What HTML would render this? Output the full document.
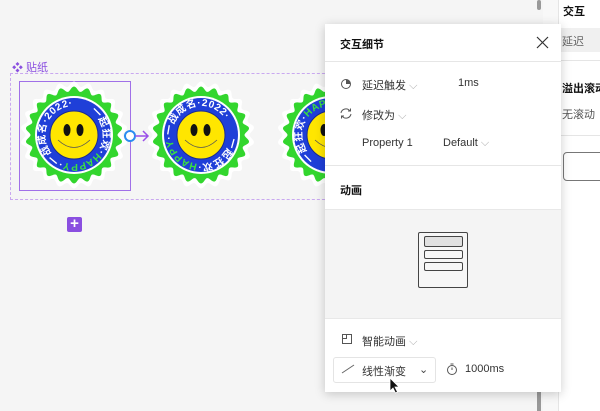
<!DOCTYPE html>
<html><head><meta charset="utf-8"><style>
*{margin:0;padding:0;box-sizing:border-box}
body{width:600px;height:411px;overflow:hidden;background:#f5f5f5;position:relative;font-family:"Liberation Sans","Noto Sans CJK SC",sans-serif;color:#222}
.abs{position:absolute}
.t{font-size:11px;color:#333;white-space:nowrap}
</style></head><body>
<div class="abs" style="left:12px;top:59px;font-size:11px;color:#8a4fe0">❖ 贴纸</div>
<div class="abs" style="left:10px;top:73px;width:330px;height:127px;border:1px dashed #c9a8f0"></div>
<div class="abs" style="left:19px;top:81px;width:112px;height:110px;border:1px solid #a070e8"></div>
<div class="abs" style="left:67px;top:217px;width:15px;height:15px;background:#8a4fe0;border-radius:2px;color:#fff;font-size:15px;line-height:14px;text-align:center;font-weight:bold">+</div>
<svg class="abs" style="left:0;top:0" width="340" height="240" id="stk"></svg>
<script>
(function(){
var svg=document.getElementById('stk');
function scal(r,a,n){var p=[];for(var i=0;i<=360;i++){var t=i*Math.PI/180;var rr=r+a*Math.cos(n*t);p.push((rr*Math.sin(t)).toFixed(2)+','+(-rr*Math.cos(t)).toFixed(2));}return p.join(' ');}
function st(cx,cy,rot){
 var g='<g transform="translate('+cx+','+cy+')">';
 g+='<polygon points="'+scal(51,2.5,22)+'" fill="#fff"/>';
 g+='<polygon points="'+scal(46,2.5,22)+'" fill="#33d62e"/>';
 g+='<circle r="39" fill="#fff"/><circle r="37" fill="#1f3fd8"/>';
 g+='<g transform="rotate('+rot+')"><path id="rp'+cx+'" d="M0,-29 A29,29 0 1,1 -0.1,-29" fill="none"/>';
 g+='<text font-size="10" font-weight="bold" fill="#fff" letter-spacing="0.6" font-family="Liberation Sans,Noto Sans CJK SC,sans-serif"><textPath href="#rp'+cx+'">一起狂欢·<tspan fill="#3be040">HAPPY</tspan>·一战成名·2022·</textPath></text></g>';
 g+='<circle r="24" fill="#ffe600" stroke="#1a2a90" stroke-width="1"/>';
 g+='<ellipse cx="-7" cy="-5" rx="3.5" ry="6" fill="#111"/><ellipse cx="6" cy="-5" rx="3.5" ry="6" fill="#111"/>';
 g+='<path d="M-16,5 Q0,20 16,5" fill="none" stroke="#555" stroke-width=".8"/></g>';
 return g;}
svg.innerHTML=st(74,135,35)+st(201,135,95)+st(331,135,215)+
 '<circle cx="130" cy="136" r="5" fill="#fff" stroke="#2a8cf0" stroke-width="2"/><path d="M135,136 H148 M143,131 L148,136 L143,141" stroke="#9a4fe8" stroke-width="1.5" fill="none"/>';
})();
</script>
<div class="abs" style="left:537px;top:0;width:4px;height:10px;background:#999;border-radius:2px"></div>
<div class="abs" style="left:537px;top:390px;width:4px;height:21px;background:#999"></div>
<div class="abs" style="left:543px;top:0;width:18px;height:411px;background:#f8f8f8"></div>
<div class="abs" style="left:558px;top:0;width:42px;height:411px;background:#fff;border-left:1px solid #e5e5e5">
 <div class="t abs" style="left:4px;top:3px;font-weight:bold;color:#111">交互</div>
 <div class="abs" style="left:0;top:28px;width:42px;height:24px;background:#f0f0f0"></div>
 <div class="t abs" style="left:3px;top:33px;color:#666">延迟</div>
 <div class="abs" style="left:0;top:60px;width:42px;border-top:1px solid #e5e5e5"></div>
 <div class="t abs" style="left:3px;top:80px;font-weight:bold;color:#111">溢出滚动</div>
 <div class="t abs" style="left:3px;top:106px;color:#555">无滚动</div>
 <div class="abs" style="left:0;top:135px;width:42px;border-top:1px solid #e5e5e5"></div>
 <div class="abs" style="left:4px;top:152px;width:50px;height:29px;border:1px solid #777;border-radius:4px"></div>
</div>
<div class="abs" style="left:325px;top:24px;width:236px;height:368px;background:#fff;box-shadow:0 2px 10px rgba(0,0,0,.2)">
 <div class="t abs" style="left:15px;top:12px;font-weight:bold;color:#111">交互细节</div>
 <svg class="abs" style="left:211px;top:12px" width="13" height="13"><path d="M1,1 L12,12 M12,1 L1,12" stroke="#333" stroke-width="1.2"/></svg>
 <div class="abs" style="left:0;top:37px;width:236px;border-top:1px solid #e6e6e6"></div>
 <svg class="abs" style="left:15px;top:54px" width="12" height="12"><circle cx="6" cy="6" r="4.5" fill="none" stroke="#555"/><path d="M6,6 V1.5 A4.5,4.5 0 0,1 10.5,6 Z" fill="#555"/></svg>
 <div class="t abs" style="left:37px;top:53px">延迟触发 <span style="color:#aaa">⌵</span></div>
 <div class="t abs" style="left:133px;top:53px">1ms</div>
 <svg class="abs" style="left:14px;top:83px" width="14" height="13"><path d="M2,6 A5,5 0 0,1 11,4 M12,7 A5,5 0 0,1 3,9 M9,4 H11.5 V1.5 M5,9 H2.5 V11.5" fill="none" stroke="#555"/></svg>
 <div class="t abs" style="left:37px;top:83px">修改为 <span style="color:#aaa">⌵</span></div>
 <div class="t abs" style="left:37px;top:113px">Property 1</div>
 <div class="t abs" style="left:118px;top:113px">Default <span style="color:#aaa">⌵</span></div>
 <div class="abs" style="left:0;top:141px;width:236px;border-top:1px solid #e6e6e6"></div>
 <div class="t abs" style="left:15px;top:158px;font-weight:bold;color:#111">动画</div>
 <div class="abs" style="left:0;top:185px;width:236px;height:110px;background:#f4f4f4;border-top:1px solid #e8e8e8;border-bottom:1px solid #e8e8e8">
  <div class="abs" style="left:93px;top:22px;width:50px;height:56px;border:1px solid #444;border-radius:2px;background:#f6f6f6">
   <div class="abs" style="left:5px;top:3px;width:39px;height:11px;border:1px solid #444;border-radius:2px;background:#e0e0e0"></div>
   <div class="abs" style="left:5px;top:17px;width:39px;height:9px;border:1px solid #444;border-radius:2px"></div>
   <div class="abs" style="left:5px;top:29px;width:39px;height:9px;border:1px solid #444;border-radius:2px"></div>
  </div>
 </div>
 <svg class="abs" style="left:17px;top:310px" width="11" height="11"><rect x=".5" y=".5" width="9" height="9" fill="none" stroke="#555"/><path d="M.5,4.5 H4.5 V.5" fill="none" stroke="#555"/></svg>
 <div class="t abs" style="left:37px;top:309px">智能动画 <span style="color:#aaa">⌵</span></div>
 <div class="abs" style="left:8px;top:333px;width:103px;height:26px;border:1px solid #e4e4e4;border-radius:3px"></div>
 <svg class="abs" style="left:16px;top:339px" width="14" height="12"><path d="M1,10 L13,2" stroke="#666"/></svg>
 <div class="t abs" style="left:37px;top:339px">线性渐变</div>
 <div class="t abs" style="left:94px;top:339px;color:#444">⌄</div>
 <svg class="abs" style="left:121px;top:339px" width="12" height="12"><circle cx="6" cy="7" r="4.5" fill="none" stroke="#555"/><path d="M6,7 V4.5 M4.5,1 H7.5" stroke="#555"/></svg>
 <div class="t abs" style="left:140px;top:339px">1000ms</div>
 <svg class="abs" style="left:64px;top:353px" width="12" height="17"><path d="M1,1 V14 L4,11 L6.5,16 L8.5,15 L6,10 L10,10 Z" fill="#111" stroke="#fff" stroke-width=".8"/></svg>
</div>
</body></html>
